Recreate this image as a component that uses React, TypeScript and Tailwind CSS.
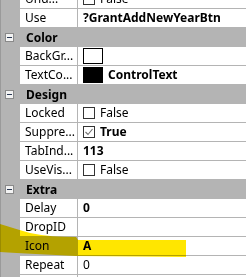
import React from "react";

type Row =
  | { kind: "cat"; label: string }
  | {
      kind: "prop";
      name: string;
      value?: string;
      bold?: boolean;
      check?: "on" | "off";
      swatch?: "white" | "black";
      selected?: boolean;
    };

const rows: Row[] = [
  { kind: "prop", name: "Und...", value: "False", check: "off" },
  { kind: "prop", name: "Use", value: "?GrantAddNewYearBtn", bold: true },
  { kind: "cat", label: "Color" },
  { kind: "prop", name: "BackGr...", swatch: "white" },
  { kind: "prop", name: "TextCo...", swatch: "black", value: "ControlText", bold: true },
  { kind: "cat", label: "Design" },
  { kind: "prop", name: "Locked", value: "False", check: "off" },
  { kind: "prop", name: "Suppre...", value: "True", check: "on", bold: true },
  { kind: "prop", name: "TabInd...", value: "113", bold: true },
  { kind: "prop", name: "UseVis...", value: "False", check: "off" },
  { kind: "cat", label: "Extra" },
  { kind: "prop", name: "Delay", value: "0", bold: true },
  { kind: "prop", name: "DropID" },
  { kind: "prop", name: "Icon", value: "A", bold: true, selected: true },
  { kind: "prop", name: "Repeat", value: "0" },
  { kind: "prop", name: "" },
];

function CheckBox({ on }: { on: boolean }) {
  return (
    <span className="w-[12px] h-[12px] border border-[#333333] bg-white flex items-center justify-center shrink-0">
      {on && (
        <svg width="10" height="10" viewBox="0 0 10 10">
          <path d="M1.5 5 L4 7.5 L8.5 2" fill="none" stroke="#6d6d6d" strokeWidth="1.1" />
        </svg>
      )}
    </span>
  );
}

function PropRow({ row }: { row: Extract<Row, { kind: "prop" }> }) {
  return (
    <div className="flex h-[19px]">
      <div className="w-[19px] shrink-0 bg-[#b4b4b4]" />
      <div
        className={`w-[58px] shrink-0 border-b border-r border-[#b4b4b4] pl-[5px] flex items-center whitespace-nowrap overflow-hidden ${
          row.selected ? "bg-[#b4b4b4]" : "bg-white"
        }`}
      >
        {row.name}
      </div>
      <div className="flex-1 border-b border-[#b4b4b4] bg-white pl-[5px] flex items-center gap-[5px] whitespace-nowrap overflow-hidden">
        {row.check && <CheckBox on={row.check === "on"} />}
        {row.swatch && (
          <span
            className={`w-[20px] h-[16px] border border-black shrink-0 ${
              row.swatch === "black" ? "bg-black" : "bg-white"
            }`}
          />
        )}
        {row.value && <span className={row.bold ? "font-bold" : ""}>{row.value}</span>}
      </div>
    </div>
  );
}

function CatRow({ label }: { label: string }) {
  return (
    <div className="flex h-[19px] items-center bg-[#b4b4b4]">
      <div className="w-[19px] shrink-0 flex items-center justify-center pr-[3px]">
        <span className="w-[9px] h-[9px] border border-[#8a8a8a] bg-[#f3f3f3] flex items-center justify-center">
          <span className="w-[5px] h-[1px] bg-[#2b3a55]" />
        </span>
      </div>
      <span className="pl-[6px] font-bold">{label}</span>
    </div>
  );
}

export default function App() {
  return (
    <div
      className="relative w-[246px] h-[277px] overflow-hidden bg-[#b4b4b4] text-[12px] text-black leading-none"
      style={{ fontFamily: '"Noto Sans", "Open Sans", sans-serif' }}
    >
      <div className="mt-[-10px] border-l border-[#9a9a9a]">
        {rows.map((r, i) =>
          r.kind === "cat" ? <CatRow key={i} label={r.label} /> : <PropRow key={i} row={r} />
        )}
      </div>
      {/* marker stroke over the Icon row */}
      <svg
        className="absolute left-0 top-[222px] mix-blend-multiply pointer-events-none"
        width="190"
        height="38"
        viewBox="0 0 190 38"
      >
        <path
          d="M0 2 C10 5 19 8 30 11 C45 14 60 15 76 15 L78 18 L186 18 L186 35 L76 34 C50 33 20 31 0 30 Z"
          fill="#ffe600"
        />
      </svg>
    </div>
  );
}
